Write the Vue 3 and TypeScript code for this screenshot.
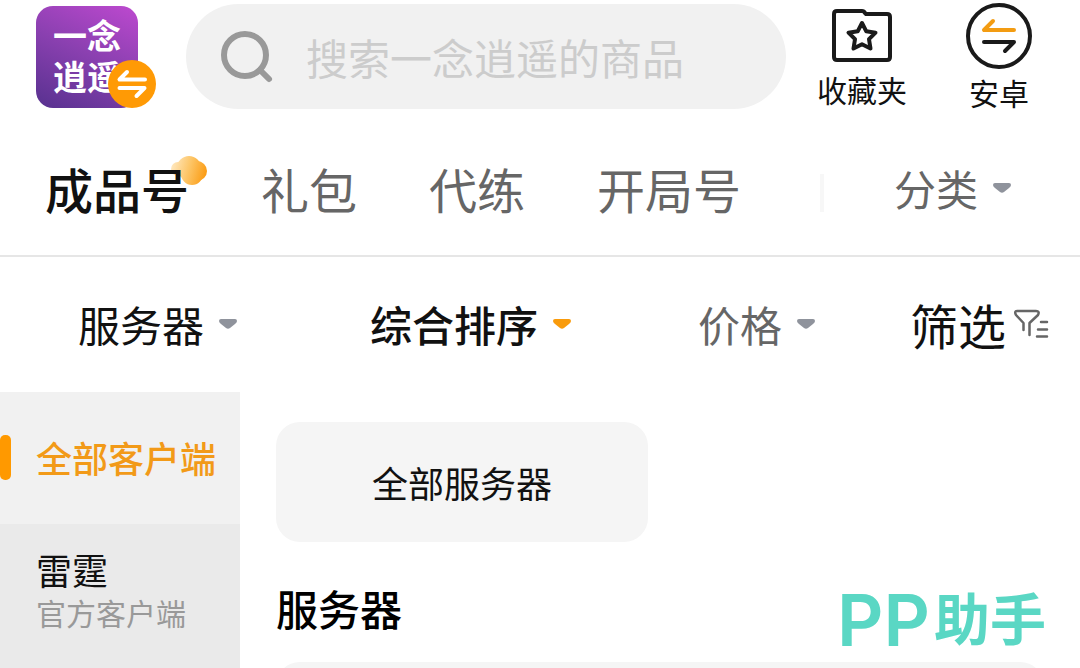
<script setup lang="ts">
import { ref } from 'vue'

interface Filter {
  label: string
  tone: string
}

interface Client {
  name: string
  detail?: string
}

const keyword = ref('')

const tabs: string[] = ['成品号', '礼包', '代练', '开局号']
const activeTab = ref('成品号')

const filters: Filter[] = [
  { label: '服务器', tone: 'dark' },
  { label: '综合排序', tone: 'active' },
  { label: '价格', tone: 'muted' },
]

const clients: Client[] = [
  { name: '全部客户端' },
  { name: '雷霆', detail: '官方客户端' },
]
const activeClient = ref('全部客户端')
</script>

<template>
  <div class="page">
    <header class="top">
      <button class="game" type="button" aria-label="切换游戏">
        <span class="game-art"><span>一念逍遥</span></span>
        <svg class="game-switch" viewBox="0 0 48 48" aria-hidden="true">
          <circle cx="24" cy="24" r="24" fill="#ff9a05" />
          <path d="M19 12L11.500 19.500H37M11.500 28H36.500L28.500 36" />
        </svg>
      </button>

      <label class="search">
        <svg viewBox="0 0 54 54" aria-hidden="true">
          <circle cx="25" cy="25" r="21" />
          <path d="M40 40L49 49" />
        </svg>
        <input v-model="keyword" type="text" placeholder="搜索一念逍遥的商品" aria-label="搜索商品" />
      </label>

      <button class="action favorites" type="button">
        <svg viewBox="0 0 60 54" aria-hidden="true">
          <path d="M5 3H30Q32 3 33 5L34 6H55Q58 6 58 9V49Q58 52 55 52H5Q2 52 2 49V6Q2 3 5 3Z" />
          <path d="M30 15L34.300 23.300L43.500 24.700L37 31.200L38.500 40.500L30 36.200L21.500 40.500L23 31.200L16.500 24.700L25.700 23.300Z" />
        </svg>
        <span>收藏夹</span>
      </button>

      <button class="action platform" type="button">
        <svg viewBox="0 0 66 66" aria-hidden="true">
          <circle cx="33" cy="33" r="31" />
          <path class="orange" d="M27 18L18 27H48" />
          <path d="M18 39H48L39 48" />
        </svg>
        <span>安卓</span>
      </button>
    </header>

    <nav class="tabs">
      <button
        v-for="tab in tabs"
        :key="tab"
        type="button"
        class="tab"
        :class="{ current: tab === activeTab }"
        @click="activeTab = tab"
      >
        <svg v-if="tab === activeTab" class="cloud" viewBox="0 0 36 30" aria-hidden="true">
          <defs>
            <linearGradient id="cloud-fill" gradientUnits="userSpaceOnUse" x1="0" y1="8" x2="36" y2="18">
              <stop offset="0" stop-color="#ffe9c2" />
              <stop offset="0.5" stop-color="#fdc566" />
              <stop offset="1" stop-color="#fb9a10" />
            </linearGradient>
          </defs>
          <g fill="url(#cloud-fill)">
            <circle cx="7" cy="13" r="7" />
            <circle cx="18" cy="12" r="12" />
            <circle cx="26" cy="15" r="10" />
            <circle cx="21" cy="18" r="11" />
          </g>
        </svg>
        {{ tab }}
      </button>
      <button class="more" type="button">
        <span>分类</span>
        <svg class="caret" viewBox="0 0 18 10" aria-hidden="true">
          <path d="M2 0H16Q18 0 18 2Q18 3.500 16 5L11 9Q9 10.600 7 9L2 5Q0 3.500 0 2Q0 0 2 0Z" />
        </svg>
      </button>
    </nav>

    <div class="filters">
      <button v-for="item in filters" :key="item.label" type="button" :class="item.tone">
        <span>{{ item.label }}</span>
        <svg class="caret" viewBox="0 0 18 10" aria-hidden="true">
          <path d="M2 0H16Q18 0 18 2Q18 3.500 16 5L11 9Q9 10.600 7 9L2 5Q0 3.500 0 2Q0 0 2 0Z" />
        </svg>
      </button>
      <button type="button" class="refine">
        <span>筛选</span>
        <svg class="funnel" viewBox="0 0 36 30" aria-hidden="true">
          <path d="M10.500 21V14L3 6Q1 2 4 2H23Q27 2 25 6L16.500 14V26M28 13H34M25 20.500H34M24 27.500H34" />
        </svg>
      </button>
    </div>

    <div class="body">
      <aside class="clients">
        <button
          v-for="client in clients"
          :key="client.name"
          type="button"
          :class="{ selected: client.name === activeClient }"
          @click="activeClient = client.name"
        >
          <span class="name">{{ client.name }}</span>
          <span v-if="client.detail" class="detail">{{ client.detail }}</span>
        </button>
      </aside>

      <main class="servers">
        <button type="button" class="card">全部服务器</button>
        <h2>服务器</h2>
        <button type="button" class="card wide" aria-label="展开服务器"></button>
      </main>
    </div>

    <div class="brand"><span class="latin">PP</span><span>助手</span></div>
  </div>
</template>

<style>
body {
  margin: 0;
  background: #fff;
}
</style>

<style scoped>
.page {
  position: relative;
  display: flex;
  flex-direction: column;
  height: 100vh;
  overflow: hidden;
  color: #111;
  font-family: "Noto Sans CJK SC", "Noto Sans", sans-serif;
}

button {
  margin: 0;
  padding: 0;
  border: 0;
  background: none;
  color: inherit;
  font: inherit;
  white-space: nowrap;
  cursor: pointer;
}

svg {
  display: block;
  flex: none;
}

.top {
  display: flex;
  align-items: flex-start;
  flex: none;
  height: 124px;
  padding: 0 48px 0 36px;
}

.game {
  position: relative;
  width: 120px;
  margin: 6px 30px 0 0;
}

.game-art {
  display: flex;
  align-items: center;
  justify-content: center;
  box-sizing: border-box;
  width: 102px;
  height: 102px;
  padding: 0 16px 4px;
  border-radius: 17px;
  background: linear-gradient(205deg, #b848cc 5%, #8a40b0 48%, #57318f 100%);
  color: #fff;
  font-size: 34px;
  font-weight: 700;
  line-height: 41px;
  white-space: normal;
}

.game-switch {
  position: absolute;
  right: 0;
  bottom: 0;
  width: 48px;
  height: 48px;
}

.game-switch path {
  fill: none;
  stroke: #fff;
  stroke-width: 4;
  stroke-linecap: round;
  stroke-linejoin: round;
}

.search {
  display: flex;
  align-items: center;
  flex: 1;
  min-width: 0;
  height: 105px;
  margin: 4px 31px 0 0;
  padding: 0 34px;
  box-sizing: border-box;
  border-radius: 53px;
  background: #f1f1f1;
}

.search svg {
  width: 54px;
  height: 54px;
  fill: none;
  stroke: #999;
  stroke-width: 6;
  stroke-linecap: round;
}

.search input {
  flex: 1;
  min-width: 0;
  height: 64px;
  margin: 0 0 0 32px;
  padding: 0;
  border: 0;
  outline: 0;
  background: none;
  color: #111;
  font: inherit;
  font-size: 42px;
}

.search input::placeholder {
  color: #ccc;
  opacity: 1;
}

.action {
  display: flex;
  flex-direction: column;
  align-items: center;
  font-size: 30px;
  line-height: 40px;
}

.action svg {
  fill: none;
  stroke: #1a1a1a;
  stroke-width: 4;
  stroke-linecap: round;
  stroke-linejoin: round;
}

.action .orange {
  stroke: #f39c12;
}

.favorites {
  margin: 8px 59px 0 0;
}

.favorites svg {
  width: 60px;
  height: 54px;
  margin-bottom: 7px;
}

.platform {
  width: 66px;
  margin-top: 3px;
}

.platform svg {
  width: 66px;
  height: 66px;
  margin-bottom: 3px;
}

.tabs {
  display: flex;
  align-items: center;
  flex: none;
  gap: 72px;
  height: 127px;
  padding: 0 69px 4px 45px;
  border-bottom: 2px solid #e6e6e6;
}

.tab {
  position: relative;
  z-index: 0;
  color: #666;
  font-size: 48px;
  line-height: 64px;
}

.tab.current {
  color: #111;
  font-weight: 500;
}

.cloud {
  position: absolute;
  z-index: -1;
  top: 0;
  right: -18px;
  width: 36px;
  height: 30px;
}

.more {
  display: flex;
  align-items: center;
  gap: 15px;
  margin-left: auto;
  padding-left: 74px;
  background: linear-gradient(#f7f7f7, #f7f7f7) left 14px / 4px 38px no-repeat;
  color: #666;
  font-size: 42px;
  line-height: 56px;
}

.caret {
  width: 18px;
  height: 10px;
  fill: #8f939c;
}

.filters {
  display: grid;
  grid-template-columns: 292fr 328fr 212fr 170fr;
  align-items: center;
  flex: none;
  height: 133px;
  padding: 0 0 2px 78px;
  font-size: 42px;
  line-height: 56px;
}

.filters button {
  display: flex;
  align-items: center;
  gap: 15px;
}

.filters .active {
  font-weight: 500;
}

.filters .active .caret {
  fill: #f99b0c;
}

.filters .muted {
  color: #666;
}

.filters .refine {
  gap: 7px;
  font-size: 48px;
}

.funnel {
  width: 36px;
  height: 30px;
  fill: none;
  stroke: #666;
  stroke-width: 2.5;
  stroke-linecap: round;
  stroke-linejoin: round;
}

.body {
  display: flex;
  flex: 1;
  min-height: 0;
}

.clients {
  display: flex;
  flex-direction: column;
  flex: none;
  width: 240px;
  background: #eaeaea;
}

.clients button {
  position: relative;
  display: flex;
  flex-direction: column;
  align-items: flex-start;
  justify-content: center;
  flex: none;
  box-sizing: border-box;
  min-height: 132px;
  padding: 22px 0 24px 36px;
}

.clients .selected {
  background: #f1f1f1;
  color: #f29a18;
  font-weight: 500;
}

.clients .selected::before {
  content: "";
  position: absolute;
  left: 0;
  top: 43px;
  width: 11px;
  height: 45px;
  border-radius: 5px;
  background: #ff9900;
}

.name {
  font-size: 36px;
  line-height: 46px;
}

.detail {
  color: #999;
  font-size: 30px;
  line-height: 40px;
}

.servers {
  display: grid;
  grid-template-columns: 1fr 1fr;
  align-content: start;
  flex: 1;
  column-gap: 24px;
  padding: 30px 36px 0;
}

.card {
  height: 120px;
  border-radius: 24px;
  background: #f5f5f5;
  font-size: 36px;
}

.wide,
h2 {
  grid-column: 1 / -1;
}

h2 {
  margin: 38px 0 26px;
  color: #000;
  font-size: 42px;
  font-weight: 500;
  line-height: 56px;
}

.brand {
  position: absolute;
  right: 34px;
  bottom: 12px;
  display: flex;
  align-items: flex-start;
  gap: 4px;
  color: #5ad7c4;
  font-size: 56px;
  font-weight: 700;
  line-height: 64px;
  pointer-events: none;
}

.latin {
  font-family: Inter, "Liberation Sans", sans-serif;
  font-size: 72px;
  font-weight: 600;
  line-height: 72px;
}
</style>
